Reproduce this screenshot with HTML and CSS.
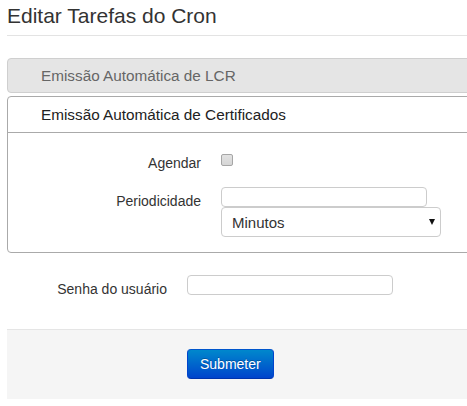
FILE: index.html
```html
<!DOCTYPE html>
<html lang="pt">
<head>
<meta charset="utf-8">
<title>Editar Tarefas do Cron</title>
<link rel="stylesheet" href="styles.css">
</head>
<body>
<div class="page">
  <h1 class="title">Editar Tarefas do Cron</h1>
  <hr class="rule">
  <div class="panel panel-closed">
    <div class="panel-heading">Emissão Automática de LCR</div>
  </div>
  <div class="panel panel-open">
    <div class="panel-heading">Emissão Automática de Certificados</div>
    <div class="panel-body">
      <div class="row row-check">
        <label class="label" for="agendar">Agendar</label>
        <div class="controls"><input type="checkbox" id="agendar" class="check"></div>
      </div>
      <div class="row">
        <label class="label label-pad" for="periodo">Periodicidade</label>
        <div class="controls stack">
          <input type="text" id="periodo" class="text-input">
          <div class="select-wrap">
            <select class="select">
              <option>Minutos</option>
            </select>
          </div>
        </div>
      </div>
    </div>
  </div>
  <div class="row row-senha">
    <label class="label label-pad" for="senha">Senha do usuário</label>
    <div class="controls"><input type="password" id="senha" class="text-input"></div>
  </div>
  <div class="actions">
    <button type="button" class="btn">Submeter</button>
  </div>
</div>
</body>
</html>
```
FILE: styles.css
```css
html {
  overflow: hidden;
}
body {
  margin: 0;
  font-family: "Liberation Sans", Arial, sans-serif;
  font-size: 14px;
  line-height: 20px;
  color: #333;
  background: #fff;
}
.page {
  width: 520px;
  padding-left: 7px;
}
.title {
  margin: 3px 0 0;
  font-size: 21px;
  line-height: 25px;
  font-weight: normal;
  color: #333;
}
.rule {
  margin: 7px 0 0;
  border: 0;
  border-top: 1px solid #e3e3e3;
  height: 0;
}
.panel {
  border-radius: 4px;
}
.panel-closed {
  margin-top: 22px;
  background: #e5e5e5;
  border: 1px solid #cfcfcf;
}
.panel-closed .panel-heading {
  padding: 7px 0 6px 33px;
  font-size: 15.3px;
  line-height: 20px;
  color: #666;
}
.panel-open {
  margin-top: 3px;
  border: 1px solid #aaa;
}
.panel-open .panel-heading {
  padding: 8px 0 7px 33px;
  font-size: 15.3px;
  line-height: 20px;
  color: #222;
  border-bottom: 1px solid #aaa;
}
.panel-body {
  padding: 20px 0 15px 0;
}
.row {
  display: grid;
  grid-template-columns: 160px auto;
  column-gap: 20px;
  align-items: start;
}
.panel-body .row {
  padding-left: 33px;
}
.row-check {
  margin-bottom: 14px;
}
.label {
  text-align: right;
  color: #333;
}
.label-pad {
  padding-top: 4px;
}
.controls {
  display: flex;
}
.stack {
  flex-direction: column;
  align-items: flex-start;
}
.check {
  appearance: none;
  -webkit-appearance: none;
  margin: 1px 0 0;
  width: 12px;
  height: 12px;
  border: 1px solid #a6a6a6;
  border-radius: 2px;
  background: linear-gradient(#e2e2e2, #d6d6d6);
}
.text-input {
  box-sizing: border-box;
  width: 206px;
  height: 20px;
  margin: 0;
  padding: 0 6px;
  border: 1px solid #ccc;
  border-radius: 4px;
  background: #fff;
  font: inherit;
}
.select-wrap {
  position: relative;
}
.select-wrap::after {
  content: "";
  position: absolute;
  left: 208px;
  top: 12px;
  width: 0;
  height: 0;
  border-left: 3px solid transparent;
  border-right: 3px solid transparent;
  border-top: 6px solid #111;
  pointer-events: none;
}
.select {
  appearance: none;
  -webkit-appearance: none;
  box-sizing: border-box;
  width: 220px;
  height: 30px;
  margin: 0;
  padding: 0 0 0 10px;
  border: 1px solid #ccc;
  border-radius: 4px;
  background: #fff;
  font-family: "Liberation Sans", Arial, sans-serif;
  font-size: 15px;
  color: #333;
}
.row-senha {
  margin-top: 22px;
}
.actions {
  margin-top: 30px;
  border-top: 1px solid #e5e5e5;
  background: #f5f5f5;
  padding: 19px 0 20px 180px;
}
.btn {
  box-sizing: border-box;
  height: 30px;
  padding: 4px 12px;
  border: 1px solid #0044aa;
  border-color: #0055cc #0044cc #0033aa;
  border-radius: 4px;
  background: linear-gradient(#0088cc, #0044cc);
  color: #fff;
  font-family: "Liberation Sans", Arial, sans-serif;
  font-size: 14px;
  line-height: 20px;
  text-shadow: 0 -1px 0 rgba(0, 0, 0, 0.25);
}
```
